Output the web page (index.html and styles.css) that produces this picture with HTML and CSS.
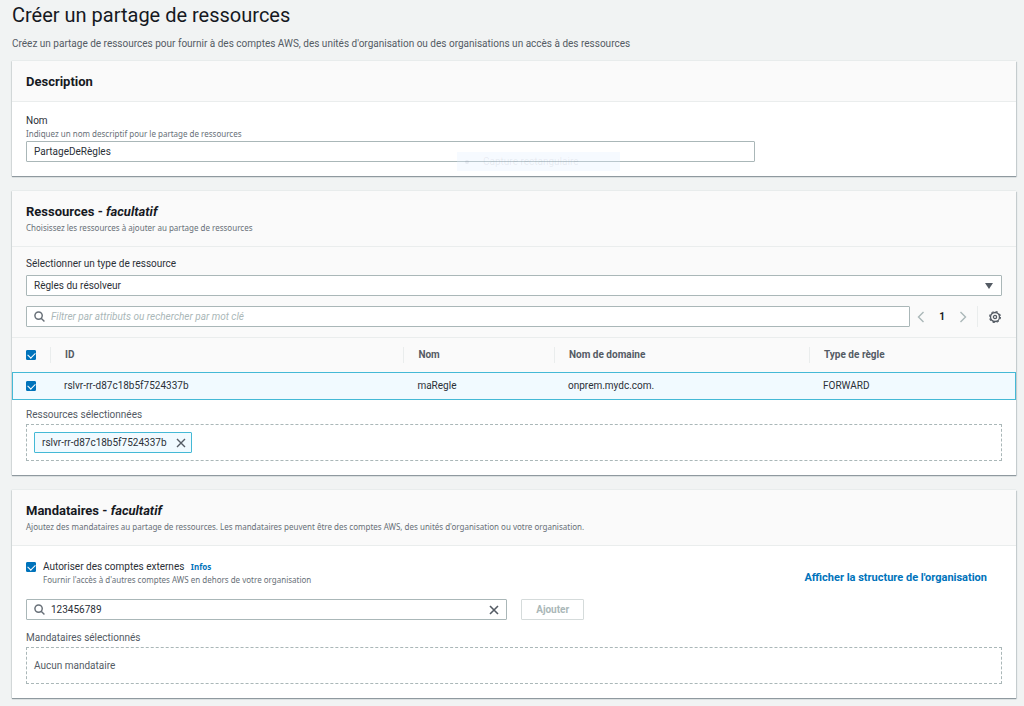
FILE: index.html
```html
<!DOCTYPE html>
<html lang="fr">
<head>
    <meta charset="UTF-8">
    <meta name="viewport" content="width=device-width, initial-scale=1.0">
    <title>Créer un partage de ressources</title>
    <link rel="stylesheet" href="styles.css">
</head>
<body>
    <header class="page-header">
        <h1>Créer un partage de ressources</h1>
        <p>Créez un partage de ressources pour fournir à des comptes AWS, des unités d'organisation ou des organisations un accès à des ressources</p>
    </header>
    <main>
        <section class="card">
            <div class="card-header">
                <h2>Description</h2>
            </div>
            <div class="card-body name-body">
                <label class="label" for="name">Nom</label>
                <p class="hint">Indiquez un nom descriptif pour le partage de ressources</p>
                <input class="field name-field" type="text" id="name" value="PartageDeRègles">
                <div class="snip"><span class="snip-dot"></span><span class="snip-text">Capture rectangulaire</span></div>
            </div>
        </section>

        <section class="card">
            <div class="card-header">
                <h2>Ressources - <em>facultatif</em></h2>
                <p class="hint">Choisissez les ressources à ajouter au partage de ressources</p>
            </div>
            <div class="toolbar">
                <label class="label" for="type">Sélectionner un type de ressource</label>
                <div class="select">
                    <select class="field" id="type">
                        <option>Règles du résolveur</option>
                    </select>
                    <svg class="arrow" width="8" height="6" viewBox="0 0 8 6"><path d="M0 0h8L4 6z" fill="#545b64"/></svg>
                </div>
                <div class="filter-row">
                    <div class="field search">
                        <svg width="11" height="11" viewBox="0 0 12 12" fill="none" stroke="#687078" stroke-width="1.6"><circle cx="5" cy="5" r="4"/><path d="M7.8 7.8l3.6 3.6"/></svg>
                        <input type="text" aria-label="Filtrer" placeholder="Filtrer par attributs ou rechercher par mot clé">
                    </div>
                    <div class="pager">
                        <button class="icon-button" aria-label="Précédent"><svg width="8" height="12" viewBox="0 0 8 12" fill="none" stroke="#aab7b8" stroke-width="1.4"><path d="M6.5 1L1.5 6l5 5"/></svg></button>
                        <span class="page">1</span>
                        <button class="icon-button" aria-label="Suivant"><svg width="8" height="12" viewBox="0 0 8 12" fill="none" stroke="#aab7b8" stroke-width="1.4"><path d="M1.5 1l5 5-5 5"/></svg></button>
                    </div>
                    <button class="icon-button settings" aria-label="Préférences">
                        <svg width="12" height="12" viewBox="0 0 12 12" fill="none" stroke="#545b64"><circle cx="6" cy="6" r="4.5" stroke-width="1.3"/><circle cx="6" cy="6" r="5.4" stroke-width="1.2" stroke-dasharray="2.2 2.041"/><circle cx="6" cy="6" r="1.6" stroke-width="1.3"/></svg>
                    </button>
                </div>
            </div>
            <table>
                <thead>
                    <tr>
                        <th class="col-check"><input type="checkbox" aria-label="Tout sélectionner" checked></th>
                        <th class="col-id"><span>ID</span></th>
                        <th class="col-name"><span>Nom</span></th>
                        <th class="col-domain"><span>Nom de domaine</span></th>
                        <th><span>Type de règle</span></th>
                    </tr>
                </thead>
                <tbody>
                    <tr class="selected">
                        <td class="col-check"><input type="checkbox" aria-label="Sélectionner rslvr-rr-d87c18b5f7524337b" checked></td>
                        <td>rslvr-rr-d87c18b5f7524337b</td>
                        <td>maRegle</td>
                        <td>onprem.mydc.com.</td>
                        <td>FORWARD</td>
                    </tr>
                </tbody>
            </table>
            <div class="card-body picked-body">
                <h3>Ressources sélectionnées</h3>
                <div class="picked">
                    <span class="token">rslvr-rr-d87c18b5f7524337b
                        <button class="icon-button" aria-label="Supprimer"><svg width="10" height="10" viewBox="0 0 10 10" stroke="#545b64" stroke-width="1.4"><path d="M1 1l8 8M9 1L1 9"/></svg></button>
                    </span>
                </div>
            </div>
        </section>

        <section class="card">
            <div class="card-header">
                <h2>Mandataires - <em>facultatif</em></h2>
                <p class="hint">Ajoutez des mandataires au partage de ressources. Les mandataires peuvent être des comptes AWS, des unités d'organisation ou votre organisation.</p>
            </div>
            <div class="card-body principals-body">
                <div class="external-row">
                    <input type="checkbox" id="external" checked>
                    <div class="external-text">
                        <label class="label" for="external">Autoriser des comptes externes</label>
                        <a class="info" href="#">Infos</a>
                        <p class="hint">Fournir l'accès à d'autres comptes AWS en dehors de votre organisation</p>
                    </div>
                    <a class="structure" href="#">Afficher la structure de l'organisation</a>
                </div>
                <div class="add-row">
                    <div class="field search">
                        <svg width="11" height="11" viewBox="0 0 12 12" fill="none" stroke="#687078" stroke-width="1.6"><circle cx="5" cy="5" r="4"/><path d="M7.8 7.8l3.6 3.6"/></svg>
                        <input type="text" aria-label="Mandataire" value="123456789">
                        <button class="icon-button" aria-label="Effacer"><svg width="10" height="10" viewBox="0 0 10 10" stroke="#545b64" stroke-width="1.6"><path d="M1 1l8 8M9 1L1 9"/></svg></button>
                    </div>
                    <button class="add" disabled>Ajouter</button>
                </div>
                <h3>Mandataires sélectionnés</h3>
                <div class="picked">Aucun mandataire</div>
            </div>
        </section>
    </main>
</body>
</html>
```
FILE: styles.css
```css
* {
    box-sizing: border-box;
}
body {
    margin: 0;
    padding: 3px 8px 0 12px;
    background: #f1f3f3;
    color: #16191f;
    font-family: Roboto, "Noto Sans", sans-serif;
    font-size: 10px;
    line-height: 16px;
}
h1, h2, h3, p {
    margin: 0;
}
h1 {
    font-size: 20px;
    font-weight: 400;
    line-height: 24px;
}
.page-header {
    margin-bottom: 9px;
}
.page-header p {
    margin-top: 9px;
    color: #545b64;
}
input, select, button {
    font: inherit;
    color: inherit;
}
a {
    color: #0073bb;
    font-weight: 700;
    text-decoration: none;
}
a:hover {
    text-decoration: underline;
}

/* cards */
.card {
    margin-bottom: 15px;
    background: #fff;
    box-shadow: 0 1px 1px #8f999f, 1px 1px 1px #d0d6d8, -1px 0 1px #e0e4e4, 0 -1px 0 #eaeded;
}
.card-header {
    padding: 13px 14px 11px;
    background: #fafafa;
    border-bottom: 1px solid #eaeded;
}
.card-header:has(.hint) {
    padding-bottom: 10px;
}
h2 {
    font-size: 13px;
    font-weight: 700;
    line-height: 16px;
}
.hint {
    color: #687078;
    font-family: "Noto Sans", sans-serif;
    font-size: 8px;
    line-height: 12px;
}
.card-header .hint {
    line-height: 16px;
}
.card-body {
    padding: 0 14px 14px;
}
.card-body.name-body {
    position: relative;
    padding-top: 12px;
}
.card-body.principals-body {
    padding-top: 14px;
}
.label {
    display: block;
    line-height: 14px;
    color: #2b3037;
}

/* fields */
.field {
    display: block;
    width: 100%;
    height: 21px;
    padding: 0 7px;
    background: #fff;
    border: 1px solid #aab7b8;
    border-radius: 1px;
    color: #2b3037;
}
.name-field {
    width: 74.7%;
    margin-top: 1px;
}
.select {
    position: relative;
    margin: 3px 0 10px;
}
.select select {
    appearance: none;
}
.arrow {
    position: absolute;
    right: 9px;
    top: 8px;
    pointer-events: none;
}
.search {
    display: flex;
    align-items: center;
    gap: 6px;
}
.search svg {
    flex: none;
}
.search input {
    flex: 1;
    min-width: 0;
    padding: 0;
    background: none;
    border: 0;
    outline: 0;
}
.search input::placeholder {
    color: #aab7b8;
    font-style: italic;
}
input[type="checkbox"] {
    appearance: none;
    display: flex;
    align-items: center;
    justify-content: center;
    flex: none;
    width: 10px;
    height: 10px;
    margin: 0;
    border-radius: 1px;
    background: #fff;
    border: 1px solid #0073bb;
}
input[type="checkbox"]:checked {
    background: #0073bb;
}
input[type="checkbox"]:checked::before {
    content: "";
    width: 6px;
    height: 4px;
    margin-bottom: 2px;
    border: solid #fff;
    border-width: 0 0 1px 1px;
    transform: rotate(-45deg);
}
.icon-button {
    display: flex;
    align-items: center;
    padding: 0;
    background: none;
    border: 0;
    cursor: pointer;
}

/* resources */
.toolbar {
    padding: 9px 14px 10px;
    background: #fafafa;
    border-bottom: 1px solid #eaeded;
}
.toolbar .label {
    line-height: 16px;
}
.filter-row {
    display: flex;
    align-items: center;
}
.filter-row .search {
    flex: 1;
}
.pager {
    display: flex;
    align-items: center;
    gap: 14px;
    padding: 0 10px 0 7px;
}
.page {
    font-weight: 700;
}
.settings {
    height: 21px;
    padding: 0 1px 0 11px;
    border-left: 1px solid #eaeded;
}
table {
    width: 100%;
    table-layout: fixed;
    border-collapse: collapse;
}
th {
    height: 34px;
    padding: 0;
    background: #fafafa;
    color: #545b64;
    text-align: left;
}
th span {
    display: block;
    padding-left: 14px;
    border-left: 1px solid #eaeded;
}
td {
    height: 28px;
    padding: 0 0 0 14px;
    color: #2b3037;
}
.col-check {
    width: 38px;
    padding-left: 14px;
}
.col-id {
    width: 35.2%;
}
.col-name {
    width: 15%;
}
.col-domain {
    width: 25.4%;
}
.selected {
    background: #f1faff;
    outline: 1px solid #44b9d6;
    outline-offset: -1px;
}
.card-body.picked-body {
    padding-top: 7px;
}
h3 {
    margin-bottom: 1px;
    color: #545b64;
    font-size: 10px;
    font-weight: 400;
}
.picked {
    display: flex;
    align-items: center;
    height: 37px;
    padding: 0 7px;
    border: 1px dashed #aab7b8;
    color: #545b64;
}
.token {
    display: flex;
    align-items: center;
    gap: 9px;
    height: 21px;
    padding: 0 5px 0 7px;
    background: #f1faff;
    border: 1px solid #44b9d6;
    border-radius: 1px;
    color: #2b3037;
}

/* principals */
.external-row {
    display: flex;
    align-items: center;
}
.external-row input {
    align-self: flex-start;
    margin: 2px 7px 0 0;
}
.external-text .label {
    display: inline-block;
}
.external-text {
    line-height: 14px;
}
.info {
    margin-left: 4px;
    font-family: "Noto Sans", sans-serif;
    font-size: 8px;
}
.structure {
    margin: 9px 15px 0 auto;
    font-size: 11px;
}
.add-row {
    display: flex;
    gap: 14px;
    margin: 13px 0 10px;
}
.add-row .search {
    width: 49.3%;
}
.add {
    height: 21px;
    padding: 0 14px;
    background: #fff;
    border: 1px solid #d5dbdb;
    border-radius: 1px;
    color: #aab7b8;
    font-weight: 700;
    line-height: 16px;
}

/* fading capture menu entry over the name field */
.snip {
    position: absolute;
    left: 445px;
    bottom: 5px;
    display: flex;
    align-items: center;
    gap: 14px;
    width: 163px;
    height: 19px;
    padding-left: 8px;
    background: rgba(225, 238, 255, 0.3);
    color: rgba(120, 130, 145, 0.12);
    pointer-events: none;
}
.snip-dot {
    width: 4px;
    height: 4px;
    border-radius: 50%;
    background: currentColor;
}
```
